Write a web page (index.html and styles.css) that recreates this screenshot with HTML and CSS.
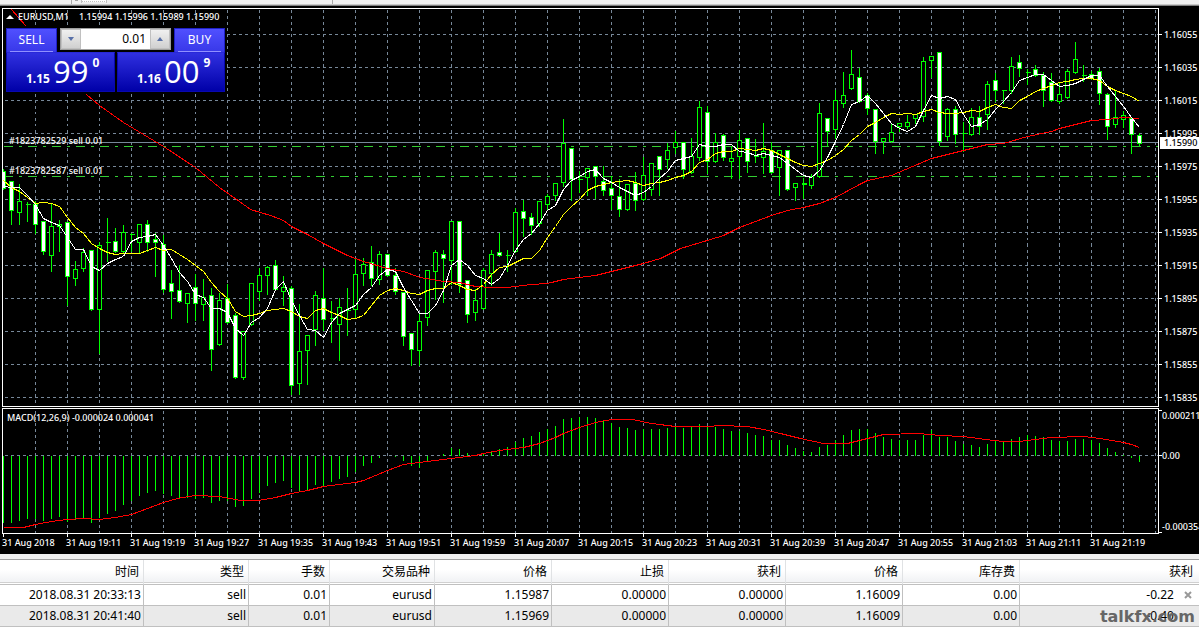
FILE: index.html
```html
<!DOCTYPE html>
<html lang="zh-CN">
<head>
<meta charset="utf-8">
<title>EURUSD,M1</title>
<link rel="stylesheet" href="styles.css">
</head>
<body>
<div class="toolbar-edge"><span class="toolbar-sep"></span><span class="toolbar-grip"></span><span class="toolbar-slot"></span><span class="toolbar-end"></span></div>
<main class="chart-window">
  <svg class="chart" id="chart" viewBox="0 0 1199 548" role="img" aria-label="EURUSD M1"></svg>
  <form class="trade">
    <button type="button" class="tab">SELL</button>
    <div class="volume">
      <button type="button" class="step" aria-label="Decrease volume"><svg viewBox="0 0 6 4"><path d="M0 0h6L3 4z"/></svg></button>
      <input class="lots" aria-label="Volume" value="0.01">
      <button type="button" class="step" aria-label="Increase volume"><svg viewBox="0 0 6 4"><path d="M0 4h6L3 0z"/></svg></button>
    </div>
    <button type="button" class="tab">BUY</button>
    <button type="button" class="quote quote-sell"><b>1.15</b><span>99</span><sup>0</sup></button>
    <button type="button" class="quote quote-buy"><b>1.16</b><span>00</span><sup>9</sup></button>
  </form>
</main>
<section class="terminal">
  <table class="orders">
    <colgroup><col class="c-time"><col class="c-type"><col class="c-lots"><col class="c-type"><col class="c-num"><col class="c-num"><col class="c-num"><col class="c-num"><col class="c-num"><col></colgroup>
    <thead>
      <tr><th>时间</th><th>类型</th><th>手数</th><th>交易品种</th><th>价格</th><th>止损</th><th>获利</th><th>价格</th><th>库存费</th><th>获利</th></tr>
    </thead>
    <tbody>
      <tr><td>2018.08.31 20:33:13</td><td>sell</td><td>0.01</td><td>eurusd</td><td>1.15987</td><td>0.00000</td><td>0.00000</td><td>1.16009</td><td>0.00</td><td><span class="profit">-0.22<button type="button" class="close" aria-label="Close order"><svg viewBox="0 0 8 8"><path d="M1 1l6 6M7 1l-6 6"/></svg></button></span></td></tr>
      <tr><td>2018.08.31 20:41:40</td><td>sell</td><td>0.01</td><td>eurusd</td><td>1.15969</td><td>0.00000</td><td>0.00000</td><td>1.16009</td><td>0.00</td><td><span class="profit no-close">-0.40</span></td></tr>
    </tbody>
  </table>
  <div class="watermark">talkfx.com</div>
</section>
<script src="chart.js"></script>
</body>
</html>
```
FILE: styles.css
```css
* { box-sizing: border-box; }
body {
  margin: 0;
  background: #f0f0f0;
  color: #000;
  font-family: "Noto Sans", "Noto Sans CJK SC", sans-serif;
  font-size: 12px;
}
button, input { margin: 0; padding: 0; border: 0; font: inherit; }
.toolbar-edge {
  display: flex;
  height: 6px;
  padding-left: 71px;
  background: #f0f0f0;
  border-bottom: 1px solid #808080;
  box-shadow: inset 0 -1px #c8c8c8;
}
.toolbar-sep, .toolbar-end { width: 1px; height: 4px; background: #a8a8a8; }
.toolbar-grip { width: 3px; height: 1px; margin-left: 3px; background: #a0a0a0; }
.toolbar-slot { width: 26px; height: 2px; margin-left: 3px; border: 1px dotted #c0c0c0; border-top: 0; background: #fff; }
.toolbar-end { margin-left: 225px; }
.chart-window { position: relative; background: #000; }
.chart { display: block; width: 100%; height: auto; }
.chart text { font-family: "Noto Sans", sans-serif; font-size: 9px; font-weight: 500; fill: #fff; }
.chart .tag-text { fill: #000; }
.grid { stroke: #778899; stroke-dasharray: 3 3; fill: none; }
.bid { stroke: #778899; }
.order-line { stroke: #32cd32; stroke-dasharray: 9 6 3 6; }
.frame { stroke: #fff; fill: none; }
.wick { stroke: #00ff00; fill: none; }
.bull { stroke: #00ff00; fill: #000; }
.bear { stroke: #00ff00; fill: #fff; }
.slow { stroke: #ff0000; fill: none; }
.mid { stroke: #ffff00; fill: none; }
.fast { stroke: #fff; fill: none; }
.solid { fill: #fff; }

.trade {
  position: absolute;
  left: 5px;
  top: 20px;
  display: grid;
  grid-template-columns: 51px 58px 2px 57px 51px;
  grid-template-rows: 24px 40px;
  padding: 2px 1px;
  background: #000;
}
.tab {
  position: relative;
  background: linear-gradient(#5050ff, #3838e8);
  border: 1px solid #2020c8;
  border-bottom: 0;
  color: #fff;
  padding-bottom: 2px;
  font-size: 12px;
  line-height: 20px;
}
.tab::after {
  content: "";
  position: absolute;
  left: 3px;
  right: 3px;
  bottom: 0;
  height: 1px;
  background: #9090ff;
}
.volume {
  grid-column: 2 / 5;
  display: flex;
  height: 22px;
  margin: 0 3px;
  border: 1px solid #a0a0a0;
  background: #fff;
}
.step {
  width: 20px;
  border: 1px solid #c0c0c0;
  background: linear-gradient(#f0f0f0, #d0d0d0);
  display: flex;
  align-items: center;
  justify-content: center;
}
.step svg { width: 6px; height: 4px; fill: #5870a8; }
.lots { flex: 1; min-width: 0; padding: 0 4px 2px 0; text-align: right; background: #fff; }
.quote {
  display: flex;
  background: linear-gradient(#3030e0, #0000a8);
  border: 1px solid #0808b0;
  border-top-color: #2828d8;
  color: #fff;
  padding-left: 19px;
  line-height: 36px;
}
.quote-sell { grid-column: 1 / 3; }
.quote-buy { grid-column: 4 / 6; }
.quote b { align-self: flex-end; line-height: 24px; }
.quote span { font-family: "Open Sans", sans-serif; font-weight: 400; font-size: 31px; line-height: 36px; margin: 0 4px 0 3px; }
.quote sup { font-size: 12px; font-weight: bold; line-height: 20px; align-self: flex-start; }

.terminal { position: relative; padding-top: 5px; background: #f0f0f0; }
.orders {
  width: 100%;
  table-layout: fixed;
  border-collapse: separate;
  border-spacing: 0;
  background: #fff;
  border-top: 1px solid #a0a0a0;
}
.c-time { width: 144px; }
.c-type { width: 105px; }
.c-lots { width: 81px; }
.c-num { width: 117px; }
.orders th {
  height: 25px;
  padding: 2px 4px 2px 0;
  text-align: right;
  font-weight: normal;
  line-height: 20px;
  border-right: 1px solid #e0e2e4;
  border-bottom: 1px solid #c0c0c0;
  background: linear-gradient(#fff 0 10px, #f3f4f6 20px 22px, #d0d0d0 22px 23px, #fff 23px);
}
.orders td {
  height: 21px;
  padding: 0 2px 0 0;
  text-align: right;
  line-height: 20px;
  border-right: 1px solid #c0c0c0;
  border-bottom: 1px solid #c0c0c0;
}
.orders th:last-child { padding-right: 6px; }
.orders td:last-child, .orders th:last-child { border-right: 0; }
.orders tbody tr:nth-child(2) { background: #eaeaea; }
.profit { display: flex; justify-content: flex-end; align-items: center; padding-right: 5px; }
.no-close { padding-right: 23px; }
.close { display: flex; width: 8px; height: 8px; margin-left: 10px; background: none; }
.close svg { width: 8px; height: 8px; stroke: #999; stroke-width: 2; }
.watermark {
  position: absolute;
  right: 4px;
  bottom: 1px;
  color: #666;
  font: bold 16px/18px "DejaVu Sans", sans-serif;
}
```
FILE: chart.js
```js
const TOP = 6;
const STEP = 8;
const LEFT = 3;
const ZERO = 455;

// high, body top, body bottom, low, kind (1 = falling, 0 = rising)
const candles = [
[168,171,188,188,1],[181,181,210,223,1],[183,201,212,223,0],[201,204,204,220,0],[200,204,224,232,1],[221,221,251,253,1],[203,226,255,270,0],[219,224,226,250,0],[221,222,276,304,1],[260,269,278,284,0],
[247,252,268,270,0],[249,250,309,309,1],[241,245,309,352,0],[217,242,242,260,0],[227,241,251,251,1],[224,232,251,251,0],[232,234,234,250,0],[224,224,242,251,0],[219,224,242,250,1],[232,239,242,275,1],
[234,244,289,291,1],[269,283,291,317,1],[264,290,301,301,1],[293,293,303,321,0],[273,287,303,319,1],[278,297,304,319,0],[287,295,349,369,1],[292,300,344,344,0],[283,298,322,322,1],[312,315,377,377,1],
[331,331,377,378,0],[282,283,324,324,0],[267,275,291,299,0],[265,267,275,293,0],[259,265,289,289,1],[275,287,291,304,0],[285,288,385,393,1],[303,351,383,393,0],[335,335,350,383,0],[290,295,329,344,0],
[267,298,319,329,1],[300,318,318,341,0],[297,307,324,359,0],[287,310,310,334,0],[258,274,309,317,0],[257,264,273,284,0],[245,262,278,284,1],[250,254,279,283,0],[254,254,275,275,1],[267,275,291,293,1],
[292,292,336,344,1],[333,333,349,364,1],[312,321,350,364,0],[270,270,317,324,0],[249,252,271,298,0],[249,254,258,301,1],[221,221,260,283,0],[221,221,284,291,1],[280,280,314,321,1],[288,300,312,319,0],
[267,270,308,308,0],[249,254,273,284,0],[232,252,255,255,1],[249,255,255,270,0],[207,212,251,251,0],[199,211,218,235,1],[212,217,225,233,1],[200,201,223,225,0],[193,196,204,208,0],[183,183,195,199,0],
[118,143,182,185,0],[148,148,179,199,1],[170,179,179,191,0],[168,168,177,194,0],[165,166,176,197,1],[165,181,190,194,1],[175,188,195,208,1],[178,196,209,215,1],[184,184,209,209,0],[171,183,200,209,1],
[156,175,199,199,0],[163,163,189,194,0],[156,156,169,194,1],[142,150,159,167,0],[130,142,147,152,0],[142,142,169,177,1],[137,156,172,172,0],[100,107,157,159,0],[105,112,161,172,1],[132,142,161,161,0],
[133,135,157,159,1],[145,158,161,177,0],[129,140,156,177,0],[138,138,161,171,1],[138,155,156,161,0],[122,151,157,172,0],[141,150,172,172,1],[150,150,167,194,0],[150,150,189,189,1],[183,183,187,199,0],
[177,183,184,197,0],[173,176,185,187,0],[102,113,176,176,0],[118,118,131,144,1],[89,100,129,137,0],[71,95,103,106,0],[49,74,88,88,0],[67,77,101,101,1],[92,95,108,113,1],[109,109,141,152,1],
[138,138,141,152,0],[122,132,141,141,0],[122,123,126,130,0],[114,122,126,127,0],[113,114,118,122,0],[56,61,116,120,0],[56,56,60,76,0],[51,52,141,144,1],[107,109,136,139,0],[105,109,134,142,1],
[121,133,133,150,0],[107,117,134,134,0],[105,117,126,133,1],[80,84,114,128,0],[72,80,90,100,1],[89,90,90,102,0],[56,66,90,92,0],[54,62,68,75,1],[68,72,72,83,0],[64,69,75,75,1],
[71,75,90,105,1],[72,82,100,100,1],[82,94,101,102,0],[68,71,97,97,0],[41,59,72,72,0],[64,75,75,80,0],[70,74,78,78,1],[67,71,93,103,1],[92,94,126,138,1],[90,117,124,126,0],
[110,115,119,126,0],[118,118,134,152,1],[132,135,143,144,1]];

const fast = [186,187,187,195,204,218,222,225,237,249,249,266,270,263,259,256,241,237,236,234,245,258,272,281,294,297,308,308,312,328,335,322,317,308,289,281,300,315,329,330,337,322,313,309,305,294,287,275,269,271,287,300,313,313,305,290,265,259,265,275,278,284,278,265,250,239,233,223,210,205,189,180,176,171,169,178,182,187,191,195,192,186,178,171,160,158,156,144,146,146,144,144,151,152,155,153,155,157,163,169,175,177,170,157,141,124,104,101,95,103,113,123,128,131,126,110,95,98,96,99,114,126,124,119,109,101,92,80,77,74,74,80,86,85,83,79,75,75,86,96,106,117,127];

const mid = [180,187,191,197,203,202,203,206,217,227,233,243,248,252,254,253,253,253,250,247,250,249,254,259,265,271,282,291,298,311,316,315,313,310,309,308,311,316,318,310,308,312,315,319,318,315,305,295,290,288,290,293,294,290,288,288,282,285,289,290,284,274,267,266,262,258,258,250,237,226,214,206,199,190,186,184,182,181,180,182,185,183,182,180,177,175,171,162,159,153,151,151,148,149,150,148,150,154,158,162,165,166,163,160,155,149,140,134,126,122,117,113,114,113,114,111,109,112,113,113,112,110,111,107,104,107,108,100,96,91,88,85,82,81,79,78,78,80,86,90,93,96,101];

const slow = "11,9 25,25 86,94 99,105 123,122 163,146 195,167 219,187 239,201 250,209 270,215 283,220 291,226 307,234 323,243 347,255 363,261 387,268 403,271 420,277 443,281 459,282 475,286 491,287 507,287 531,284 547,283 563,279 595,275 619,269 643,263 660,258 680,248 710,239 723,235 739,227 771,215 787,210 803,207 819,203 835,197 859,184 867,180 891,175 905,169 931,158 963,150 987,144 1003,143 1027,136 1051,131 1059,128 1091,120 1107,119 1123,117 1139,118";

const macd = [522,522,520,518,518,520,518,516,521,519,518,522,517,513,510,504,500,495,492,490,493,495,497,497,498,497,502,500,500,506,505,498,492,485,482,480,487,490,489,484,485,481,478,476,471,465,462,457,455,456,460,465,467,461,455,453,447,448,452,454,452,450,448,446,441,437,435,431,428,425,418,417,416,416,417,419,422,426,427,429,428,428,428,427,426,427,426,423,426,426,428,430,430,432,434,435,439,439,444,447,450,451,446,444,439,434,429,428,428,432,436,438,439,439,439,434,429,436,436,440,443,444,446,443,440,440,438,436,434,435,436,439,440,440,438,438,439,442,447,451,454,457,461];

const signal = "3,527 23,527 35,524 51,521 67,519 83,518 99,519 115,517 131,514 147,508 163,502 177,498 195,495 219,496 240,500 258,500 275,497 291,493 307,490 323,486 339,484 355,482 363,480 387,470 403,464 419,462 451,458 475,455 483,453 499,450 523,447 539,443 555,437 563,433 579,427 595,422 611,419 632,419 651,423 675,426 707,426 720,425 747,426 763,429 780,433 800,438 823,443 847,443 867,438 883,434 918,433 940,435 963,436 985,439 1003,441 1019,441 1035,439 1051,437 1083,436 1099,438 1123,442 1131,444 1139,447";

const times = ["2018","19:11","19:19","19:27","19:35","19:43","19:51","19:59","20:07","20:15","20:23","20:31","20:39","20:47","20:55","21:03","21:11","21:19"];

const xAt = i => LEFT + STEP * i;
const path = (cls, d) => `<path class="${cls}" d="${d}"/>`;
const line = (cls, points) => `<polyline class="${cls}" points="${points}"/>`;
const text = (x, y, s, cls = "") => `<text class="${cls}" x="${x}" y="${y}">${s}</text>`;
const series = values => values.map((v, i) => `${xAt(i)},${v}`).join(" ");

let shapes = "";
let labels = "";

for (let x = 35; x < 1158; x += 32) shapes += path("grid", `M${x} 9V405M${x} 410V532`);
for (let n = 0; n < 12; n++) {
  const y = 34 + 33 * n;
  shapes += path("grid", `M4 ${y}H1157`) + path("frame", `M1158 ${y}h3`);
  labels += text(1164, y + 4, (1.16055 - n * 0.0002).toFixed(5));
}
shapes += path("grid", `M4 ${ZERO}H1157`);
shapes += path("bid", "M3 142H1158") + path("order-line", "M3 146H1158") + path("order-line", "M3 176H1158");

let wicks = "";
candles.forEach(([high, top, bottom, low, falling], i) => {
  const x = xAt(i);
  wicks += path("wick", `M${x} ${high}V${low + 1}`);
  if (bottom - top < 2) wicks += path("wick", `M${x - 2} ${top}h5M${x - 2} ${bottom}h5`);
  else wicks += `<rect class="${falling ? "bear" : "bull"}" x="${x - 2}" y="${top}" width="4" height="${bottom - top}"/>`;
});
shapes += `<g clip-path="url(#plot)">${wicks}</g>`;
shapes += line("slow", slow) + line("mid", series(mid)) + line("fast", series(fast));
macd.forEach((v, i) => { shapes += path("wick", `M${xAt(i)} ${ZERO}V${v}`); });
shapes += line("slow", signal);
shapes += path("frame", "M2 406V8H1158V406ZM2 533V408H1158V533ZM1158 410h3M1158 455h3M1158 532h3");

times.forEach((t, k) => {
  shapes += path("frame", `M${3 + 64 * k} 533v3`);
  labels += text(2 + 64 * k, 546, `31 Aug ${t}`);
});

labels += text(18, 20, "EURUSD,M1") + text(79, 20, "1.15994 1.15996 1.15989 1.15990");
labels += text(9, 144, "#1823782529 sell 0.01") + text(9, 174, "#1823782587 sell 0.01");
labels += text(7, 421, "MACD(12,26,9) -0.000024 0.000041");
labels += text(1162, 419, "0.000211") + text(1162, 459, "0.00") + text(1162, 530, "-0.000354");
labels += `<path class="solid" d="M6 19h8l-4-4z"/><rect class="solid" x="1160" y="137" width="39" height="12"/>` + text(1164, 146, "1.15990", "tag-text");

document.getElementById("chart").innerHTML =
  `<defs><clipPath id="plot"><rect x="2" y="9" width="1156" height="397"/></clipPath></defs>
  <g transform="translate(0 ${-TOP})"><g transform="translate(.5 .5)" shape-rendering="crispEdges">${shapes}</g>${labels}</g>`;
```
